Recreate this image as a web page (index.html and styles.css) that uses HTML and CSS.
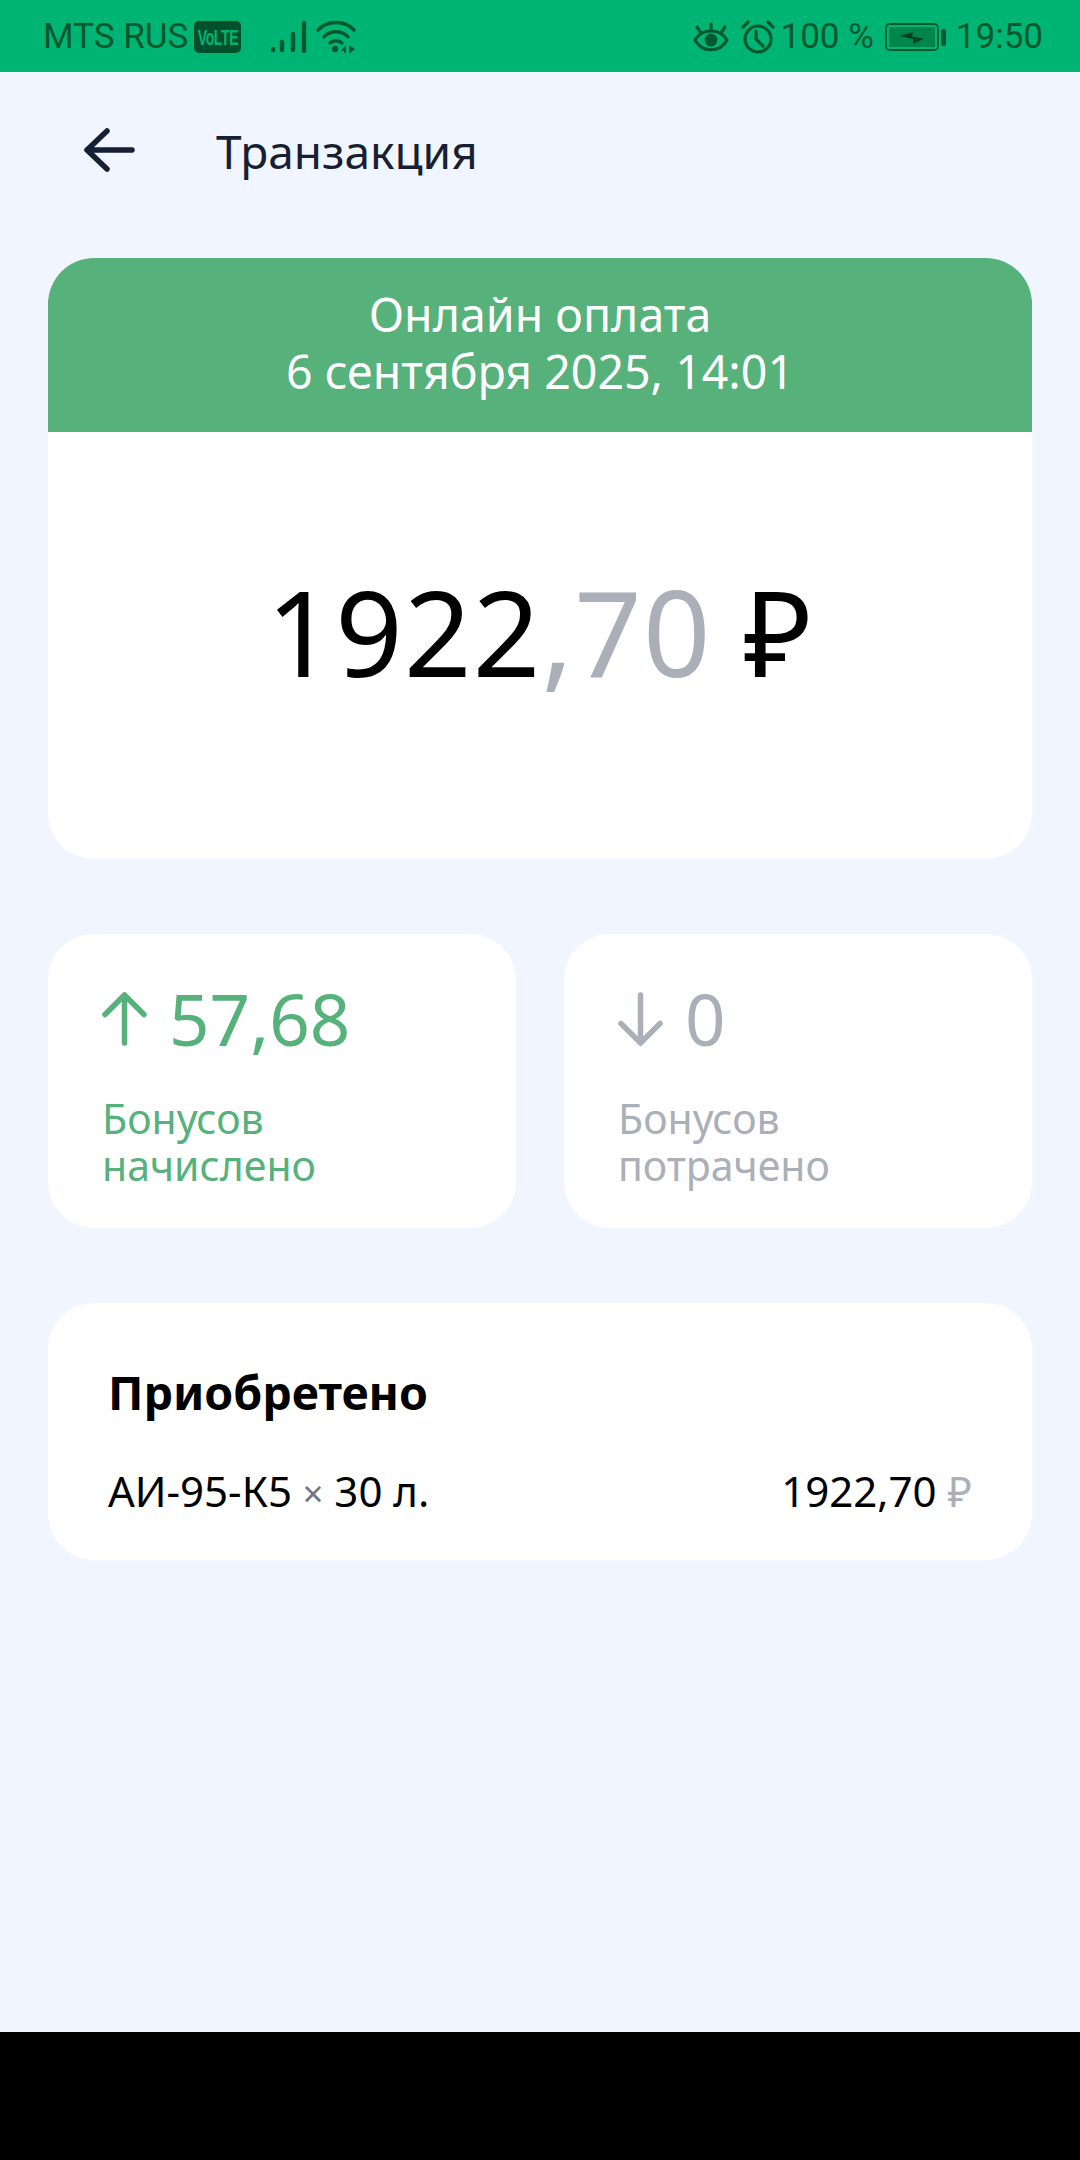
FILE: index.html
```html
<!DOCTYPE html>
<html lang="ru">
<head>
<meta charset="utf-8">
<title>Транзакция</title>
<link rel="stylesheet" href="styles.css">
</head>
<body>
<div class="screen">
  <div class="status">
    <div class="status-left">
      <span>MTS RUS</span>
      <span class="volte"><span class="volte-text">VoLTE</span></span>
      <svg class="signal" width="40" height="34" viewBox="0 0 40 34"><g fill="none" stroke="#00582f" stroke-width="4.400" stroke-linecap="round"><path d="M4 29v1"/><path d="M13 22v8"/><path d="M24 14v16"/><path d="M35 3v28"/></g></svg>
      <svg class="wifi" width="40" height="34" viewBox="0 0 40 34"><g fill="none" stroke="#00582f" stroke-width="3.400" stroke-linecap="round"><path d="M2 10C11 0 29 0 38 10"/><path d="M8 17C14 10 26 10 32 17"/><path d="M14 23c3-3 9-3 12 0"/></g><circle cx="19" cy="29" r="3.200" fill="#00582f"/><path d="M25 31l5-6v8h-2v-2zM33 25l6 4-6 5z" fill="#00582f"/></svg>
    </div>
    <div class="status-right">
      <svg class="eye" width="36" height="30" viewBox="0 0 36 30"><g fill="none" stroke="#00582f" stroke-width="3.200" stroke-linecap="round" stroke-linejoin="round"><path d="M2 18C9 6 27 6 34 18C27 31 9 31 2 18Z"/><path d="M18 2v6M4 5l4 6M32 5l-4 6"/></g><circle cx="18" cy="18" r="6.400" fill="#00582f"/></svg>
      <svg class="alarm" width="34" height="34" viewBox="0 0 34 34"><g fill="none" stroke="#00582f" stroke-width="3.200" stroke-linecap="round"><circle cx="17" cy="19" r="13"/><path d="M15 11v8l7 7M2 7l5-5M32 7l-5-5"/></g></svg>
      <span>100 %</span>
      <svg class="battery" width="61" height="28" viewBox="0 0 61 28"><rect x="1" y="1" width="52" height="26" rx="4" fill="none" stroke="#00582f" stroke-width="1.800"/><rect x="4" y="4" width="46" height="20" fill="#00864a"/><path d="M14 13L28 9l-1 4.500 12 2-11 5.500 0-5z" fill="#00431f"/><rect x="56" y="6" width="5" height="17" rx="2" fill="#00582f"/></svg>
      <span>19:50</span>
    </div>
  </div>
  <main class="page">
    <header class="appbar">
      <svg class="back" width="51" height="44" viewBox="0 0 51 44"><path d="M48 22H3M23 3L3 22l20 19" fill="none" stroke="#171f33" stroke-width="5.500" stroke-linecap="round" stroke-linejoin="round"/></svg>
      <h1>Транзакция</h1>
    </header>
    <section class="card hero">
      <div class="hero-head">Онлайн оплата<br>6 сентября 2025, 14:01</div>
      <div class="hero-amount"><span>1922</span><span class="dim">,70</span><span class="rub">&nbsp;₽</span></div>
    </section>
    <div class="bonus-row">
      <section class="card bonus green">
        <div class="bonus-value">
          <svg width="45" height="54" viewBox="0 0 45 54"><path d="M22.500 51V3M3 22.500L22.500 3 42 22.500" fill="none" stroke="currentColor" stroke-width="5.500" stroke-linecap="round" stroke-linejoin="round"/></svg>
          <span>57,68</span>
        </div>
        <div class="bonus-label">Бонусов<br>начислено</div>
      </section>
      <section class="card bonus grey">
        <div class="bonus-value">
          <svg width="45" height="54" viewBox="0 0 45 54"><path d="M22.500 3v48M3 31.500L22.500 51 42 31.500" fill="none" stroke="currentColor" stroke-width="5.500" stroke-linecap="round" stroke-linejoin="round"/></svg>
          <span>0</span>
        </div>
        <div class="bonus-label">Бонусов<br>потрачено</div>
      </section>
    </div>
    <section class="card bought">
      <h2>Приобретено</h2>
      <div class="line">
        <span>АИ-95-К5 <span class="times">×</span> 30 л.</span>
        <span>1922,70 <span class="cur">₽</span></span>
      </div>
    </section>
  </main>
  <div class="navbar"></div>
</div>
</body>
</html>
```

FILE: styles.css
```css
* { box-sizing: border-box; }
html, body { margin: 0; padding: 0; }
body { width: 1080px; height: 2160px; overflow: hidden; background: #000; font-family: "Noto Sans", "Open Sans", sans-serif; }
.screen { display: flex; flex-direction: column; height: 2160px; }
.status { height: 72px; flex: none; background: #00b574; color: #00582f; display: flex; justify-content: space-between; align-items: center; padding: 2px 37px 0 43px; font: 35px/40px Roboto, sans-serif; }
.status-left, .status-right { display: flex; align-items: center; }
.volte { display: flex; justify-content: center; align-items: center; width: 47px; height: 32px; margin-left: 6px; background: #00502b; color: #00b574; border-radius: 5px; overflow: hidden; }
.volte-text { display: inline-block; font: 700 18px/20px "Liberation Sans", Roboto, sans-serif; letter-spacing: -.5px; transform: scale(.78, 1.25); }
.signal { margin-left: 28px; }
.wifi { margin-left: 7px; }
.eye { margin-right: 12px; }
.alarm { margin-right: 6px; }
.battery { margin: 0 10px 0 11px; }
.page { flex: 1; background: #f0f5ff; padding: 0 48px; display: flex; flex-direction: column; }
.appbar { display: flex; align-items: center; height: 186px; padding: 0 0 28px 36px; flex: none; }
.back { flex: none; margin-bottom: 2px; }
.appbar h1 { margin: 0 0 0 81px; font-weight: 400; font-size: 46px; line-height: 60px; color: #171f33; }
.card { background: #fff; border-radius: 46px; overflow: hidden; }
.hero { height: 601px; display: flex; flex-direction: column; }
.hero-head { height: 174px; background: #57b17a; color: #fff; font-size: 46.500px; line-height: 57px; text-align: center; padding-top: 28px; }
.hero-amount { flex: 1; display: flex; justify-content: center; align-items: center; padding-bottom: 29px; font-size: 118px; letter-spacing: 1.200px; color: #000; white-space: pre; }
.dim { color: #abafb8; }
.bonus-row { display: grid; grid-template-columns: 468px 468px; gap: 48px; margin-top: 75px; }
.bonus { height: 294px; padding: 49px 0 0 54px; }
.green { color: #57b17a; }
.grey { color: #abafb8; }
.bonus-value { display: flex; align-items: center; gap: 22px; height: 72px; font-size: 71px; line-height: 72px; }
.bonus-value svg { flex: none; }
.bonus-label { margin-top: 40px; font-size: 41px; line-height: 47px; }
.bought { height: 257px; margin-top: 75px; padding: 59px 60px 0; color: #000; }
.bought h2 { margin: 0; font-size: 46.500px; line-height: 60px; font-weight: 700; }
.line { display: flex; justify-content: space-between; margin-top: 46px; font-size: 42px; line-height: 46px; }
.times { color: #6f7582; font-size: 36px; }
.cur { color: #abafb8; }
.navbar { height: 128px; flex: none; background: #000; }
```
